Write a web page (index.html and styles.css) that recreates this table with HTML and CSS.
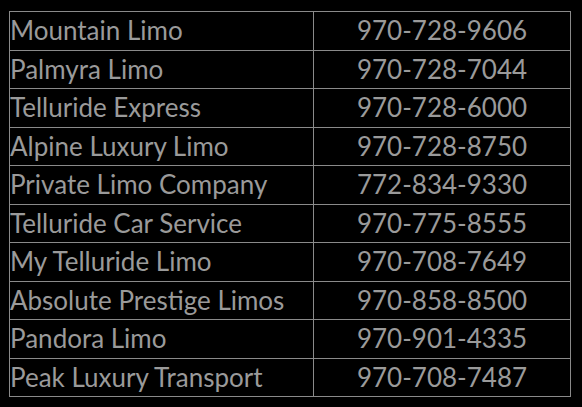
FILE: index.html
```html
<!DOCTYPE html>
<html>
<head>
<meta charset="utf-8">
<link rel="stylesheet" href="styles.css">
</head>
<body>
<table class="limos">
<tr><td class="name">Mountain Limo</td><td class="phone">970-728-9606</td></tr>
<tr><td class="name">Palmyra Limo</td><td class="phone">970-728-7044</td></tr>
<tr><td class="name">Telluride Express</td><td class="phone">970-728-6000</td></tr>
<tr><td class="name">Alpine Luxury Limo</td><td class="phone">970-728-8750</td></tr>
<tr><td class="name">Private Limo Company</td><td class="phone">772-834-9330</td></tr>
<tr><td class="name">Telluride Car Service</td><td class="phone">970-775-8555</td></tr>
<tr><td class="name">My Telluride Limo</td><td class="phone">970-708-7649</td></tr>
<tr><td class="name">Absolute Prestige Limos</td><td class="phone">970-858-8500</td></tr>
<tr><td class="name">Pandora Limo</td><td class="phone">970-901-4335</td></tr>
<tr><td class="name">Peak Luxury Transport</td><td class="phone">970-708-7487</td></tr>
</table>
</body>
</html>
```
FILE: styles.css
```css
html, body {
  margin: 0;
  padding: 0;
  background: #000;
}
body {
  padding: 11px 0 0 9px;
  font-family: "Lato", "Open Sans", sans-serif;
  color: #9a9a9a;
}
.limos {
  border-collapse: collapse;
  width: 562px;
  table-layout: fixed;
}
.limos td {
  border: 1px solid #8a8a8a;
  height: 37.5px;
  padding: 0;
  font-size: 26px;
  line-height: 37px;
  vertical-align: middle;
  white-space: nowrap;
}
.limos .name {
  width: 303px;
  text-align: left;
}
.limos .phone {
  text-align: center;
}
```
